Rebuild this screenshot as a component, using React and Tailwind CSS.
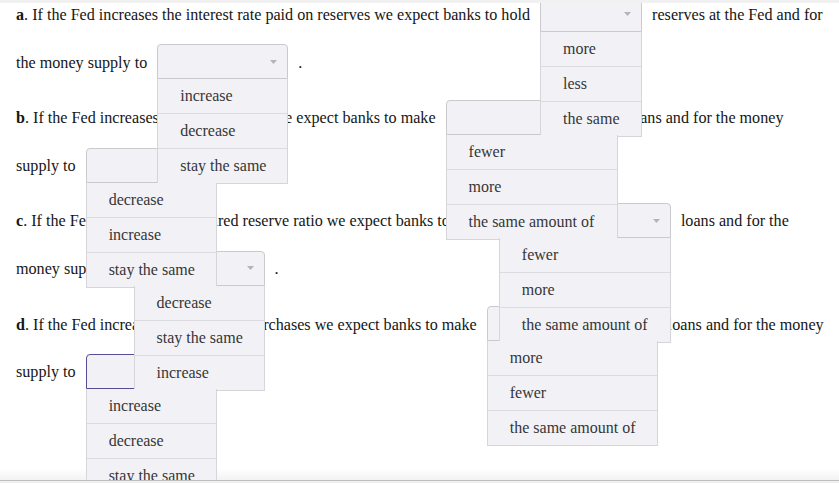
import React from "react";
import clsx from "clsx";

// open dropdown that sits inline with the sentence text
function Dropdown({ width, options, focused = false }) {
  return (
    <span className="relative mx-1.5 mb-[4px] inline-block align-middle text-[16px]">
      <span
        className={clsx(
          "flex h-[35px] items-center justify-end rounded-t-[4px] border bg-[#f2f2f6] pr-[10px]",
          width,
          focused ? "border-[#5b4a94]" : "border-[#c9c9ce]"
        )}
      >
        <svg width="7" height="4" viewBox="0 0 7 4" className="block">
          <path d="M0 0h7L3.5 4z" fill="#b4b4b8" />
        </svg>
      </span>
      <span className="absolute left-0 top-full z-10 block w-full border-x border-b border-[#d6d6da] bg-[#f2f2f6]">
        {options.map((opt, i) => (
          <span
            key={opt}
            className={clsx(
              "flex h-[34px] items-center whitespace-nowrap pl-[22px] leading-normal text-[#363636]",
              i > 0 && "h-[35px] border-t border-[#dcdce0]"
            )}
          >
            {opt}
          </span>
        ))}
      </span>
    </span>
  );
}

export default function App() {
  return (
    <div className="flex h-[483px] w-[839px] flex-col overflow-hidden bg-white font-['Liberation_Serif','Times_New_Roman',serif] text-[16.14px] text-[#161616]">
      <div className="h-[3px] shrink-0 bg-[#f1f1f1]" />
      <div className="relative flex-1 overflow-hidden">
        <div className="-mt-[12px] pl-4 leading-[47.6px]">
          <div className="mb-2 whitespace-nowrap">
            <b>a</b>. If the Fed increases the interest rate paid on reserves we expect banks to hold{" "}
            <Dropdown width="w-[102px]" options={["more", "less", "the same"]} /> reserves at the Fed and for
            <br />
            the money supply to{" "}
            <Dropdown width="w-[131px]" options={["increase", "decrease", "stay the same"]} /> .
          </div>
          <div className="mb-2 whitespace-nowrap">
            <b>b</b>. If the Fed increases the discount rate we expect banks to make{" "}
            <Dropdown width="w-[172px]" options={["fewer", "more", "the same amount of"]} /> loans and for the money
            <br />
            supply to <Dropdown width="w-[131px]" options={["decrease", "increase", "stay the same"]} /> .
          </div>
          <div className="mb-2 whitespace-nowrap">
            <b>c</b>. If the Fed increases the required reserve ratio we expect banks to make{" "}
            <Dropdown width="w-[172px]" options={["fewer", "more", "the same amount of"]} /> loans and for the
            <br />
            money supply to{" "}
            <Dropdown width="w-[131px]" options={["decrease", "stay the same", "increase"]} /> .
          </div>
          <div className="mb-2 whitespace-nowrap">
            <b>d</b>. If the Fed increases open market purchases we expect banks to make{" "}
            <Dropdown width="w-[171px]" options={["more", "fewer", "the same amount of"]} /> loans and for the money
            <br />
            supply to{" "}
            <Dropdown width="w-[131px]" options={["increase", "decrease", "stay the same"]} focused /> .
          </div>
        </div>
        <div className="pointer-events-none absolute inset-x-0 bottom-0 z-[5] h-[12px] bg-linear-to-b from-white/0 to-[#f3f3f3]" />
      </div>
      <div className="h-px shrink-0 bg-[#bdbdbd]" />
      <div className="h-[2px] shrink-0 bg-[#efefef]" />
    </div>
  );
}
